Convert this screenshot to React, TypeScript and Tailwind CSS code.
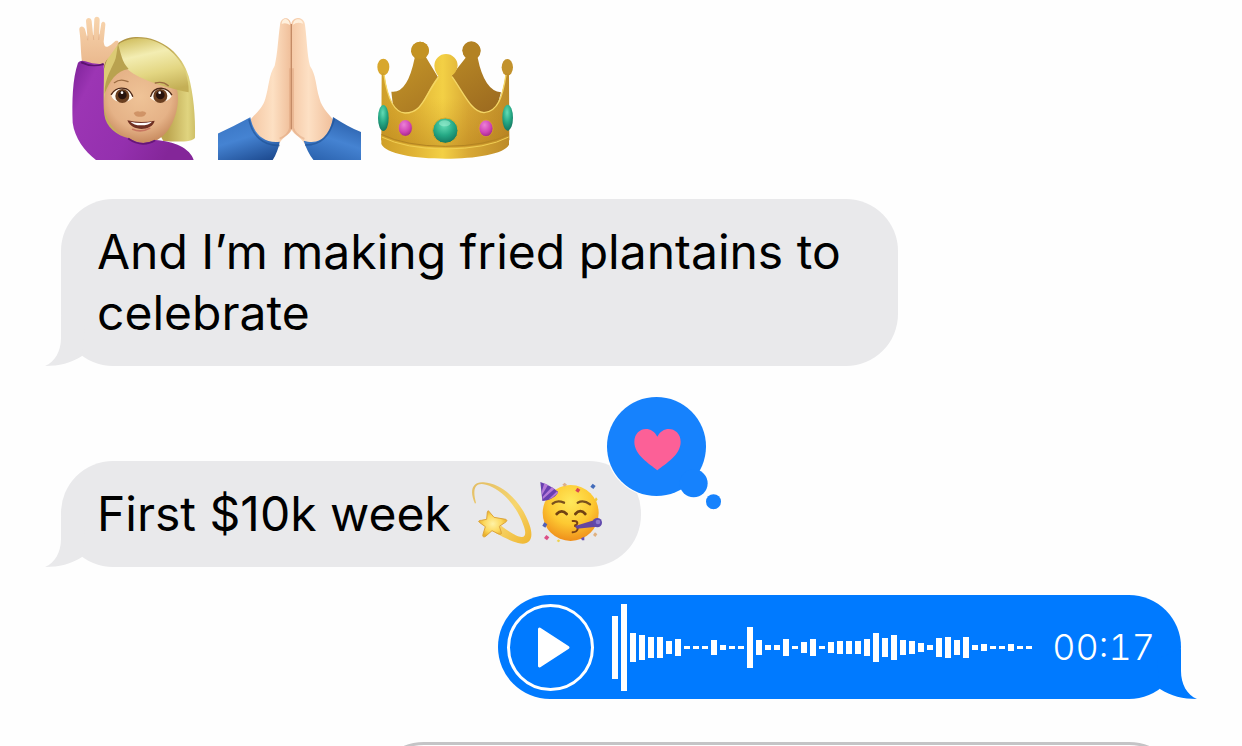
import type { ReactNode } from "react";

function RaisedHandWoman() {
  return (
    <svg viewBox="18 33 408 432" className="h-36 w-[136px]" role="img" aria-label="Woman raising hand">
      <defs>
        <radialGradient id="skin" gradientUnits="userSpaceOnUse" cx="240" cy="275" r="145">
          <stop offset="0" stopColor="#efc397" />
          <stop offset=".65" stopColor="#e5b287" />
          <stop offset="1" stopColor="#c4865a" />
        </radialGradient>
        <linearGradient id="palm" x1="0" y1="0" x2="0" y2="1">
          <stop offset="0" stopColor="#f8d5ae" />
          <stop offset="1" stopColor="#e9b68b" />
        </linearGradient>
        <linearGradient id="hairTop" x1=".3" y1="0" x2=".6" y2="1">
          <stop offset="0" stopColor="#d5c469" />
          <stop offset=".3" stopColor="#f3edb2" />
          <stop offset=".65" stopColor="#e3d682" />
          <stop offset="1" stopColor="#c4af56" />
        </linearGradient>
        <linearGradient id="hairSide" x1="0" y1="0" x2="1" y2="0">
          <stop offset="0" stopColor="#a98d42" />
          <stop offset=".7" stopColor="#bda650" />
          <stop offset=".92" stopColor="#e0d47f" />
          <stop offset="1" stopColor="#cfc068" />
        </linearGradient>
        <linearGradient id="sleeve" x1="0" y1="0" x2="1" y2=".4">
          <stop offset="0" stopColor="#7c2197" />
          <stop offset=".2" stopColor="#9c35b4" />
          <stop offset=".65" stopColor="#9430ae" />
          <stop offset="1" stopColor="#842699" />
        </linearGradient>
      </defs>
      <path d="M132 180C146 132 177 99 226 96C306 93 368 149 386 214C400 266 407 335 405 398C399 410 361 412 310 408L300 390L270 160L170 180L160 360L130 336Z" fill="url(#hairSide)" />
      <path d="M130 190L166 180L210 300L215 410Q150 400 130 340Z" fill="#c5ae5c" />
      <path d="M132 195C139 160 155 132 176 117L188 170L148 260L132 300Z" fill="#dccb74" />
      <path d="M137 258C143 208 176 175 240 174C312 172 357 225 354 284C351 352 312 414 252 416C190 418 137 356 132 302C131 286 134 270 137 258Z" fill="url(#skin)" />
      <path d="M180 114C248 76 342 118 374 196C383 220 387 245 386 262C320 247 244 227 204 194C186 179 179 150 172 126Z" fill="url(#hairTop)" />
      <path d="M174 117C184 148 184 168 206 192C170 196 147 230 134 266C132 220 160 184 167 160C171 143 171 130 174 117Z" fill="#b9a24f" />
      <path d="M66 170C62 140 63 113 58 74C57 63 71 61 75 73L83 103L78 48C78 36 94 36 95 48L100 97L103 42C105 32 120 34 119 46L117 98L124 55C127 47 137 49 136 60L131 110C133 129 140 128 153 119L166 108C176 106 179 112 172 121L151 151C142 164 134 170 132 183L98 190Z" fill="url(#palm)" />
      <path d="M83 92V106M100 90L101 105M118 88L116 105" stroke="#d69e77" strokeWidth="2" opacity=".7" />
      <path d="M54 173Q62 164 76 169Q103 179 131 176C134 217 128 281 133 329C137 365 170 391 207 400Q246 425 285 405C342 408 391 430 401 465H108C74 439 44 399 38 353C36 289 37 222 54 173Z" fill="url(#sleeve)" />
      <path d="M65 169Q98 188 130 174L132 180Q93 190 62 175Z" fill="#5c126f" />
      <path d="M206 398Q245 426 284 404L287 408Q246 433 203 403Z" fill="#651678" />
      <path d="M163 233Q181 219 204 230M286 234Q309 228 325 242" fill="none" stroke="#9c6c42" strokeWidth="4" strokeLinecap="round" />
      <path d="M154 272Q168 246 191 250Q210 252 219 278Q205 293 177 290Q159 287 154 272Z" fill="#fffaf1" />
      <path d="M270 278Q278 250 303 250Q326 252 335 274Q325 291 299 291Q279 288 270 278Z" fill="#fffaf1" />
      <ellipse cx="187" cy="273" rx="21" ry="21" fill="#6b3f20" />
      <ellipse cx="301" cy="273" rx="21" ry="21" fill="#6b3f20" />
      <circle cx="187" cy="270" r="13" fill="#27130d" />
      <circle cx="301" cy="270" r="13" fill="#27130d" />
      <circle cx="186" cy="263" r="4" fill="white" />
      <circle cx="299" cy="263" r="4" fill="white" />
      <path d="M154 268Q170 242 200 252Q212 258 218 274M272 274Q279 248 307 250Q326 253 335 269" fill="none" stroke="#4c2817" strokeWidth="4" strokeLinecap="round" />
      <path d="M221 324Q229 317 240 320Q253 317 259 324Q252 338 240 335Q228 338 221 324Z" fill="#c78759" opacity=".75" />
      <path d="M202 346Q240 355 284 347C278 378 215 382 202 346Z" fill="#6f3022" />
      <path d="M211 350Q242 358 276 350Q268 361 242 361Q222 361 211 350Z" fill="white" />
      <path d="M218 373Q243 384 269 370" fill="none" stroke="#c87761" strokeWidth="5" strokeLinecap="round" />
    </svg>
  );
}

function FoldedHands() {
  return (
    <svg viewBox="24 33 429 432" className="h-36 w-[143px]" role="img" aria-label="Folded hands">
      <defs>
        <linearGradient id="handLeft" x1="0" y1="0" x2="1" y2="0">
          <stop offset="0" stopColor="#f4c6a2" />
          <stop offset=".55" stopColor="#fde0c3" />
          <stop offset="1" stopColor="#efbd98" />
        </linearGradient>
        <linearGradient id="handRight" x1="1" y1="0" x2="0" y2="0">
          <stop offset="0" stopColor="#f0bd98" />
          <stop offset=".6" stopColor="#fde0c4" />
          <stop offset="1" stopColor="#f5c9a6" />
        </linearGradient>
        <linearGradient id="cuffLeft" x1=".3" y1="0" x2=".75" y2="1">
          <stop offset="0" stopColor="#3a76c4" />
          <stop offset=".45" stopColor="#4583d2" />
          <stop offset="1" stopColor="#1f4d93" />
        </linearGradient>
        <linearGradient id="cuffRight" x1=".7" y1="0" x2=".25" y2="1">
          <stop offset="0" stopColor="#2a5fa9" />
          <stop offset=".5" stopColor="#4583d2" />
          <stop offset="1" stopColor="#2c64b0" />
        </linearGradient>
      </defs>
      <path d="M243 57C240 33 211 34 210 60C204 101 203 146 194 182C176 211 177 245 166 281C158 314 124 334 118 351C121 389 154 428 205 428C209 396 242 390 246 372Z" fill="url(#handLeft)" />
      <path d="M244 57C248 34 282 32 285 60C291 104 291 148 300 183C319 211 317 243 328 279C336 314 366 334 373 351C370 391 333 428 289 429C280 397 251 391 244 372Z" fill="url(#handRight)" />
      <path d="M244 57V373" stroke="#c48b66" strokeWidth="4" />
      <path d="M240 190V370Q236 390 209 401M249 190V369Q255 389 283 402" fill="none" stroke="#d99a72" strokeWidth="6" opacity=".4" />
      <path d="M215 57C216 36 238 38 240 60Q227 51 215 57ZM249 59C250 37 278 38 279 56Q261 50 249 59Z" fill="#fff0dd" />
      <path d="M20 387Q70 365 121 337C128 378 155 416 209 410Q204 440 187 467H20Z" fill="url(#cuffLeft)" />
      <path d="M455 382Q420 369 369 336C362 384 335 424 281 407Q293 444 312 467H455Z" fill="url(#cuffRight)" />
      <path d="M117 343C127 391 159 424 209 421M373 341C361 387 336 421 285 420" fill="none" stroke="#1d4f91" strokeWidth="5" opacity=".6" />
    </svg>
  );
}

function Crown() {
  return (
    <svg viewBox="36 -42 408 432" className="h-36 w-[136px]" role="img" aria-label="Crown">
      <defs>
        <linearGradient id="gold" x1="0" y1="0" x2="1" y2="0">
          <stop offset="0" stopColor="#cf9f29" />
          <stop offset=".25" stopColor="#e0b335" />
          <stop offset=".48" stopColor="#f3d045" />
          <stop offset=".68" stopColor="#d9a935" />
          <stop offset="1" stopColor="#bd8b28" />
        </linearGradient>
        <linearGradient id="goldShade" x1="0" y1="0" x2="0" y2="1">
          <stop offset=".3" stopColor="#bb7d19" stopOpacity="0" />
          <stop offset="1" stopColor="#a56b12" stopOpacity=".45" />
        </linearGradient>
        <linearGradient id="goldBack" x1="0" y1="0" x2="1" y2="1">
          <stop offset="0" stopColor="#c99a29" />
          <stop offset="1" stopColor="#9a681f" />
        </linearGradient>
        <radialGradient id="emerald" cx=".45" cy=".3" r=".7">
          <stop offset="0" stopColor="#64dcb5" />
          <stop offset=".55" stopColor="#25a985" />
          <stop offset="1" stopColor="#14765f" />
        </radialGradient>
        <radialGradient id="pinkGem" cx=".4" cy=".3" r=".75">
          <stop offset="0" stopColor="#eb80d7" />
          <stop offset=".6" stopColor="#cf43b4" />
          <stop offset="1" stopColor="#9b267f" />
        </radialGradient>
      </defs>
      <path d="M79 185Q127 192 149 84A27 27 0 1 1 183 82L235 168L302 83A27 27 0 1 1 338 83Q358 182 408 187L390 253H87Z" fill="url(#goldBack)" />
      <circle cx="166" cy="61" r="26" fill="#c49323" />
      <circle cx="319" cy="61" r="27" fill="#b38223" />
      <ellipse cx="55" cy="111" rx="18" ry="25" fill="#d8a72d" />
      <ellipse cx="427" cy="112" rx="17" ry="25" fill="#c2922d" />
      <path d="M50 130L57 129C68 205 87 248 120 249C175 250 175 194 220 138Q209 125 208 107A35 35 0 1 1 278 107Q275 127 260 137C297 190 318 245 357 248C400 244 414 189 423 130L432 131L433 330C383 397 101 397 49 330Z" fill="url(#gold)" />
      <path d="M57 129C68 205 87 248 120 249C175 250 175 194 220 138H260C297 190 318 245 357 248C400 244 414 189 423 130L433 330C383 397 101 397 49 330Z" fill="url(#goldShade)" />
      <path d="M57 135C68 210 89 247 120 249C173 249 179 196 221 141M261 140C297 190 318 245 357 248C400 244 413 198 423 135" fill="none" stroke="#f4d665" strokeWidth="4" />
      <path d="M49 315Q120 352 241 353Q365 352 432 315V344C418 372 330 386 242 386C150 386 62 372 49 342Z" fill="url(#gold)" />
      <path d="M49 313Q120 348 241 349Q365 348 432 313" fill="none" stroke="#b38422" strokeWidth="3" />
      <path d="M50 321Q120 356 241 357Q365 356 431 321" fill="none" stroke="#f1ce53" strokeWidth="3" />
      <ellipse cx="55" cy="264" rx="16" ry="39" fill="url(#emerald)" />
      <ellipse cx="428" cy="263" rx="16" ry="39" fill="url(#emerald)" />
      <circle cx="241" cy="302" r="38" fill="url(#emerald)" stroke="#e0aa25" strokeWidth="3" />
      <ellipse cx="121" cy="294" rx="21" ry="25" fill="url(#pinkGem)" stroke="#e0aa25" strokeWidth="2" />
      <ellipse cx="363" cy="295" rx="21" ry="25" fill="url(#pinkGem)" stroke="#e0aa25" strokeWidth="2" />
      <ellipse cx="239" cy="280" rx="17" ry="9" fill="#a8f1d5" opacity=".5" />
    </svg>
  );
}

function DizzyStar() {
  return (
    <svg viewBox="27 33 204 198" className="h-[66px] w-[68px] shrink-0" role="img" aria-label="Dizzy">
      <defs>
        <linearGradient id="trail" x1="0" y1="0" x2="1" y2="1">
          <stop offset="0" stopColor="#e2bd66" />
          <stop offset=".55" stopColor="#f7d66d" />
          <stop offset="1" stopColor="#efb52e" />
        </linearGradient>
        <radialGradient id="star">
          <stop offset="0" stopColor="#fff2a6" />
          <stop offset=".65" stopColor="#fcd75b" />
          <stop offset="1" stopColor="#eab12d" />
        </radialGradient>
      </defs>
      <path d="M45 101C27 62 37 34 71 37C130 41 187 99 209 166C224 210 205 228 174 219C154 214 131 202 108 190L122 166C148 187 172 200 184 201C200 203 197 181 190 165C171 109 126 57 78 44C46 35 36 56 48 98Z" fill="url(#trail)" />
      <path d="M85 122L102 142L137 148C144 151 139 156 133 159L118 169L124 187C126 194 120 194 114 191L96 182L78 198C70 204 67 199 69 193L76 170L58 157C53 153 59 151 64 151L80 148L82 126Z" fill="url(#star)" stroke="#dda43a" strokeWidth="3" strokeLinejoin="round" />
    </svg>
  );
}

function PartyFace() {
  return (
    <svg viewBox="231 33 204 198" className="h-[66px] w-[68px] shrink-0" role="img" aria-label="Partying face">
      <defs>
        <radialGradient id="face" cx=".5" cy=".3" r=".72">
          <stop offset="0" stopColor="#ffe95b" />
          <stop offset=".55" stopColor="#fdc932" />
          <stop offset="1" stopColor="#ee8b19" />
        </radialGradient>
      </defs>
      <circle cx="332" cy="129" r="84" fill="url(#face)" />
      <path d="M241 36Q269 45 294 65C290 81 265 92 247 93Z" fill="#6840b0" />
      <path d="M253 40L245 66L246 75L264 45ZM276 51L248 80L248 88L283 57ZM291 64L266 88L276 84L294 69Z" fill="#b57ad8" />
      <path d="M278 101Q291 89 312 98M353 98Q371 88 390 103" fill="none" stroke="#79501d" strokeWidth="7" strokeLinecap="round" />
      <path d="M290 132Q305 116 320 132M346 132Q361 115 376 132" fill="none" stroke="#714112" strokeWidth="8" strokeLinecap="round" />
      <path d="M338 153C354 151 357 163 343 167C359 170 355 185 338 187" fill="none" stroke="#7b4114" strokeWidth="6" strokeLinecap="round" />
      <path d="M345 168L402 151L409 170L351 176Z" fill="#6546a0" />
      <circle cx="412" cy="158" r="14" fill="#6049ad" />
      <circle cx="414" cy="156" r="7" fill="#8d79cd" />
      <path d="M352 53L361 59L355 68L346 62Z" fill="#d94553" />
      <path d="M398 41L407 48L400 57L391 50Z" fill="#436cba" />
      <path d="M253 157L262 163L256 173L247 167Z" fill="#5260b7" />
      <path d="M259 195L268 202L261 211L252 204Z" fill="#dc4e85" />
      <path d="M405 187L412 193L406 201L399 195Z" fill="#dfb180" />
      <path d="M314 38L321 44L314 50L307 44Z" fill="#ddb08b" />
      <path d="M363 205L373 200L373 211L366 211Z" fill="#6551ad" />
      <path d="M408 82L413 88L408 96L403 90Z" fill="#eec83d" />
      <path d="M295 208L301 212L296 217L290 213Z" fill="#efd34d" />
    </svg>
  );
}

function HeartReaction() {
  return (
    <svg viewBox="51 36 342 336" className="absolute -top-16 -right-20 h-28 w-[114px] overflow-visible" role="img" aria-label="Loved">
      <circle cx="199.500" cy="184.500" r="152" fill="#fefefe" />
      <g fill="#1682fd">
        <circle cx="199.500" cy="184.500" r="148.500" />
        <circle cx="311" cy="295" r="42" />
        <circle cx="370.500" cy="350" r="22.500" />
      </g>
      <path d="M202 256C178 235 133 211 133 170C133 128 184 117 202 155C220 117 272 128 272 170C272 211 227 235 202 256Z" fill="#fc6097" />
    </svg>
  );
}

function Tail({ side }: { side: "left" | "right" }) {
  return (
    <svg
      viewBox="0 0 40 50"
      aria-hidden="true"
      className={
        side === "left"
          ? "absolute bottom-0 -left-4 h-[50px] w-10 fill-[#e9e9eb]"
          : "absolute -right-4 bottom-0 h-[50px] w-10 -scale-x-100 fill-[#007aff]"
      }
    >
      <path d="M16 0V22C16 35 10 46 0 50C14 50 26 47 37 40L40 10Z" />
    </svg>
  );
}

function Received({ children, className = "" }: { children: ReactNode; className?: string }) {
  return (
    <div className={`relative rounded-[52px] bg-[#e9e9eb] pt-[22px] pr-9 pb-[23px] pl-9 text-5xl leading-[61px] text-black ${className}`}>
      <Tail side="left" />
      {children}
    </div>
  );
}

const levels = [
  63, 87, 29, 25, 21, 21, 13, 17, 3, 3, 3, 15, 5, 3, 3, 41, 15, 5, 5, 17, 3, 11, 17, 3,
  11, 13, 13, 13, 17, 29, 19, 25, 15, 13, 9, 5, 19, 21, 15, 21, 5, 7, 3, 3, 7, 3, 3,
];

function VoiceMessage() {
  return (
    <div className="relative mt-7 flex h-[104px] w-[683px] shrink-0 items-center self-end rounded-[52px] bg-[#007aff] pr-[26px] pl-[9px] text-white">
      <Tail side="right" />
      <button type="button" aria-label="Play voice message" className="flex size-[87px] shrink-0 items-center justify-center rounded-full border-3 border-white">
        <svg viewBox="0 0 87 87" className="size-[87px] shrink-0" aria-hidden="true">
          <path d="M32.500 25L61 43.500L32.500 62Z" fill="white" stroke="white" strokeWidth="3" strokeLinejoin="round" />
        </svg>
      </button>
      <svg viewBox="0 0 420 87" className="ml-[18px] h-[87px] w-[420px] shrink-0" role="img" aria-label="Waveform" shapeRendering="crispEdges">
        {levels.map((level, i) => (
          <rect key={i} x={i * 9} y={(87 - level) / 2} width="6" height={level} fill="white" />
        ))}
      </svg>
      <time className="ml-auto text-4xl leading-none font-light tabular-nums">00:17</time>
    </div>
  );
}

export default function App() {
  return (
    <main className="flex h-dvh flex-col items-start overflow-hidden bg-[#fefefe] pt-4 pr-[61px] pl-[61px] font-['Inter',sans-serif]">
      <div className="flex shrink-0 gap-4 pl-[5px]">
        <RaisedHandWoman />
        <FoldedHands />
        <Crown />
      </div>
      <Received className="mt-[39px] w-full max-w-[837px] shrink-0">And I’m making fried plantains to celebrate</Received>
      <Received className="mt-[95px] flex shrink-0 items-center">
        <span>First $10k week</span>
        <span className="ml-[18px] flex h-[61px] items-center">
          <DizzyStar />
          <PartyFace />
        </span>
        <HeartReaction />
      </Received>
      <VoiceMessage />
      <div className="mt-[43px] h-[104px] w-full max-w-[809px] shrink-0 self-end rounded-[52px] border-3 border-[#c4c4c6]" />
    </main>
  );
}
